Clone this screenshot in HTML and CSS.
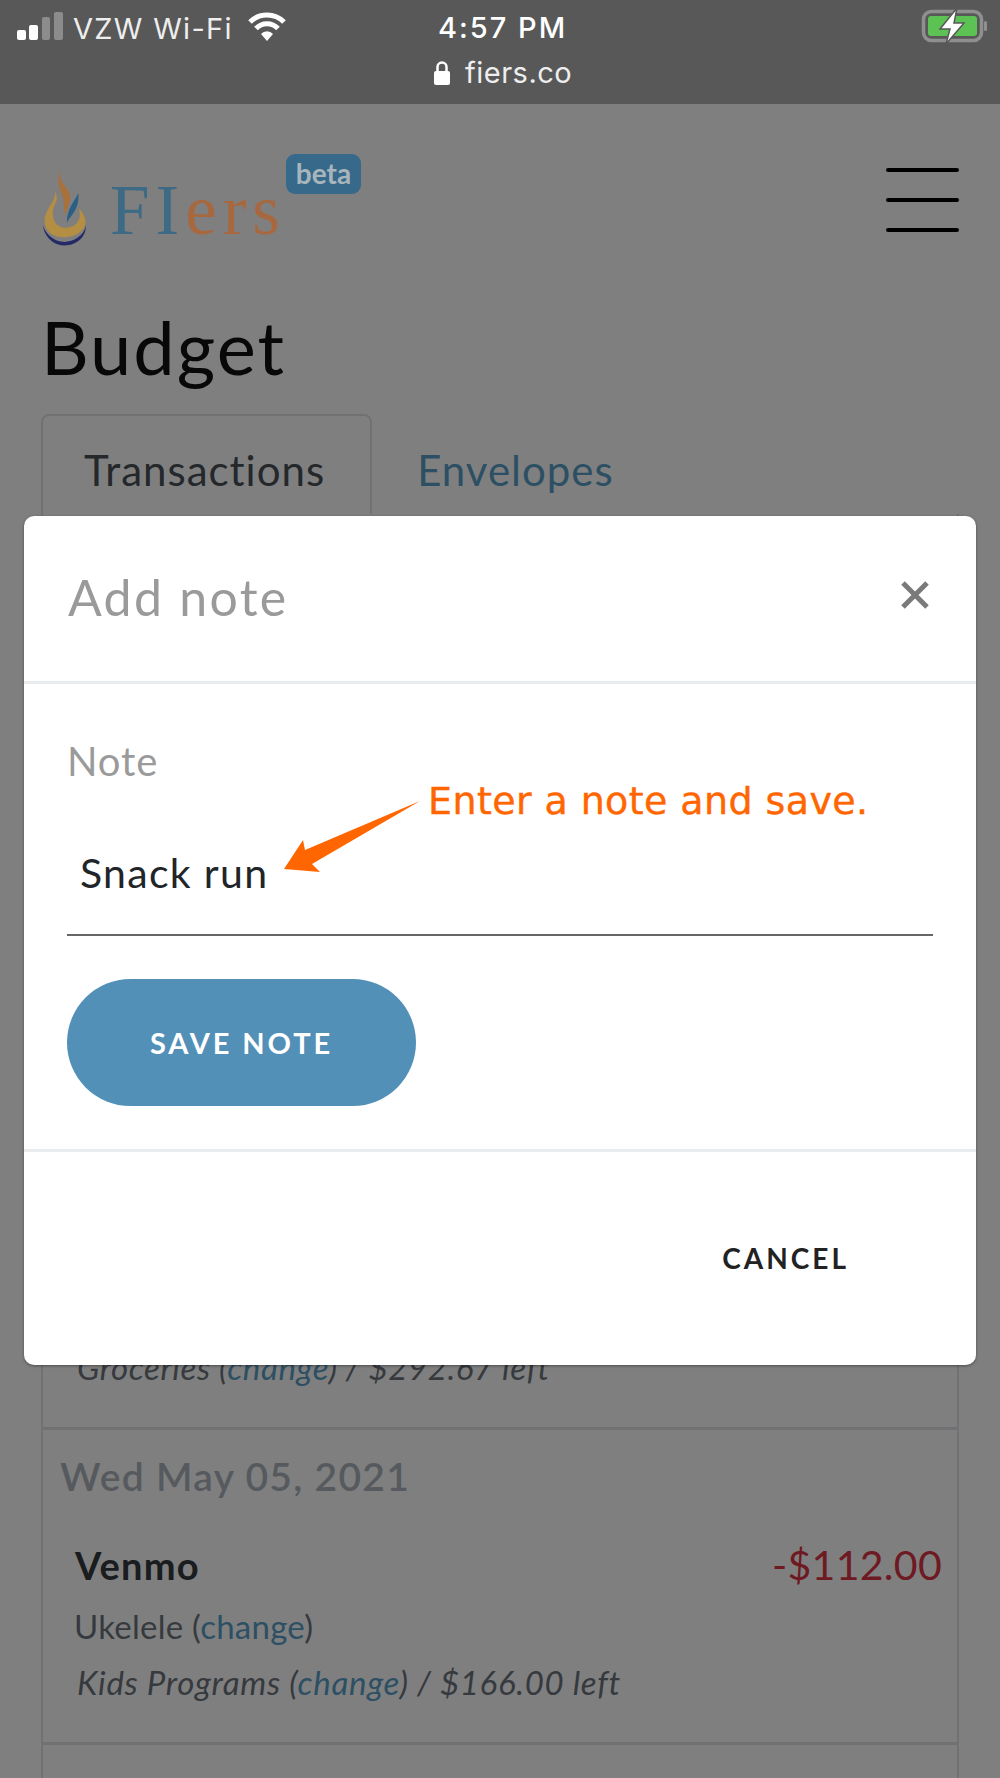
FILE: index.html
```html
<!DOCTYPE html>
<html lang="en">
<head>
    <meta charset="UTF-8">
    <meta name="viewport" content="width=device-width, initial-scale=1.0">
    <title>Budget - FIers</title>
    <link rel="stylesheet" href="styles.css">
</head>
<body>
    <!-- iOS status bar -->
    <div class="statusbar">
        <div class="status-left">
            <svg class="signal" width="46" height="28" viewBox="0 0 46 28">
                <rect x="0" y="18" width="9" height="10" rx="2" fill="#fff"/>
                <rect x="12" y="13" width="9" height="15" rx="2" fill="#fff"/>
                <rect x="25" y="5" width="8" height="23" rx="2" fill="#8c8c8c"/>
                <rect x="37" y="0" width="9" height="28" rx="2" fill="#8c8c8c"/>
            </svg>
            <span class="carrier">VZW Wi-Fi</span>
            <svg class="wifi" width="40" height="30" viewBox="0 0 40 30">
                <path d="M20 30l-6-7a8 8 0 0 1 12 0z" fill="#fff"/>
                <path d="M3 11a24 24 0 0 1 34 0M9 17.500a15 15 0 0 1 22 0" fill="none" stroke="#fff" stroke-width="5"/>
            </svg>
        </div>
        <div class="status-center">
            <div class="clock">4:57 PM</div>
            <div class="address">
                <svg width="18" height="26" viewBox="0 0 18 26">
                    <path d="M4.500 12V7a4.500 4.500 0 0 1 9 0v5" fill="none" stroke="#fff" stroke-width="2.500"/>
                    <rect x="1" y="11" width="16" height="14" rx="2" fill="#fff"/>
                </svg>
                <span>fiers.co</span>
            </div>
        </div>
        <svg class="battery" width="66" height="36" viewBox="0 0 66 36">
            <rect x="2.500" y="3.500" width="58" height="29" rx="8" fill="none" stroke="#8f8f8f" stroke-width="3.500"/>
            <rect x="7" y="8" width="49" height="20" rx="3" fill="#5cc254"/>
            <rect x="63" y="13" width="3" height="10" rx="1.500" fill="#8f8f8f"/>
            <path d="M36 0L19 21h10l-4 15 18-21H33z" fill="#fff" stroke="#585858" stroke-width="1.500"/>
        </svg>
    </div>

    <header class="navbar">
        <div class="logo">
            <svg class="flame" width="43" height="78" viewBox="0 0 130 233">
                <path d="M-1 170C5 215 40 233 65 233c35 0 65-23 65-61-5 33-40 50-65 50-30 0-57-22-66-52z" fill="#232a66"/>
                <path d="M37 70C38 95 20 110 10 135c-12 30-2 60 30 70 35 10 85-5 88-40 2-20-10-35-20-45 7 20 4 40-13 52-20 13-50 8-60-12-10-20-5-40 3-55 6-13 4-25-1-35z" fill="#b48e42"/>
                <path d="M54 3C46 30 60 45 75 65c15 20 3 45-7 75-8-25-2-45-12-65C46 55 42 25 54 3z" fill="#a8703a"/>
                <path d="M107 75C95 100 72 120 72 165c13-25 38-40 35-90z" fill="#2c5f85"/>
            </svg>
            <div class="wordmark"><span class="word-blue">FI</span><span class="word-orange">ers</span></div>
            <span class="beta">beta</span>
        </div>
        <div class="burger">
            <div></div>
            <div></div>
            <div></div>
        </div>
    </header>

    <main class="container">
        <h1>Budget</h1>

        <ul class="tabs">
            <li class="tab active">Transactions</li>
            <li class="tab">Envelopes</li>
        </ul>

        <section class="tx-list">
            <div class="tx-row tx-first">
                <p class="tx-line tx-italic">Groceries (<a href="#">change</a>) / $292.67 left</p>
            </div>
            <div class="tx-row">
                <h3 class="tx-date">Wed May 05, 2021</h3>
                <div class="tx-head">
                    <span class="tx-name">Venmo</span>
                    <span class="tx-amount">-$112.00</span>
                </div>
                <p class="tx-line">Ukelele (<a href="#">change</a>)</p>
                <p class="tx-line tx-italic">Kids Programs (<a href="#">change</a>) / $166.00 left</p>
            </div>
            <div class="tx-row">
                <h3 class="tx-date">Tue May 04, 2021</h3>
            </div>
        </section>
    </main>

    <!-- Add note dialog -->
    <div class="backdrop">
        <div class="modal">
            <div class="modal-header">
                <h2>Add note</h2>
                <svg class="close" width="30" height="30" viewBox="0 0 30 30">
                    <path d="M3 3l24 24M27 3L3 27" stroke="#7a7a7a" stroke-width="5"/>
                </svg>
            </div>
            <div class="modal-body">
                <label class="field-label">Note</label>
                <div class="field-input">Snack run</div>
                <button class="btn-save">SAVE NOTE</button>
                <!-- annotation over the form -->
                <div class="callout">Enter a note and save.</div>
                <svg class="callout-arrow" width="140" height="76" viewBox="0 0 140 76">
                    <path d="M137 4L22 53l-2-10L1 72l36 3-8-8z" fill="#ff6600"/>
                </svg>
            </div>
            <div class="modal-footer">
                <button class="btn-cancel">CANCEL</button>
            </div>
        </div>
    </div>
</body>
</html>
```

FILE: styles.css
```css
* {
    margin: 0;
    padding: 0;
    box-sizing: border-box;
}

body {
    position: relative;
    width: 1000px;
    height: 1778px;
    overflow: hidden;
    font-family: "Lato", "Noto Sans", sans-serif;
    background: #fff;
    color: #212529;
}

/* Status bar */
.statusbar {
    position: relative;
    z-index: 2;
    height: 104px;
    background: #585858;
    color: #fff;
    display: flex;
    justify-content: space-between;
    padding: 8px 13px 0 17px;
    font-family: "Inter", "Liberation Sans", sans-serif;
    font-size: 29px;
}

.status-left {
    display: flex;
    align-items: center;
    gap: 10px;
    height: 36px;
    color: #eee;
    letter-spacing: 1.300px;
}

.carrier {
    padding-top: 4px;
}

.status-left .wifi {
    margin-left: 4px;
}

.status-center {
    position: absolute;
    left: 433px;
    top: 10px;
    text-align: center;
}

.clock {
    font-weight: 500;
    line-height: 36px;
    letter-spacing: 2px;
}

.address {
    display: flex;
    align-items: center;
    gap: 14px;
    line-height: 36px;
    margin-top: 9px;
    letter-spacing: 0.500px;
    color: #eee;
}

/* Navbar */
.navbar {
    display: flex;
    justify-content: space-between;
    align-items: flex-start;
    padding: 64px 41px 0 43px;
    height: 200px;
}

/* logo sits above the backdrop, colours below are already dimmed */
.logo {
    position: relative;
    z-index: 2;
    display: flex;
    align-items: flex-end;
    gap: 24px;
}

.wordmark {
    font-family: "Liberation Serif", serif;
    font-size: 71px;
    letter-spacing: 6px;
    line-height: 71px;
}

.word-blue {
    color: #3d6a84;
}

.word-orange {
    color: #a8683f;
}

.beta {
    position: absolute;
    left: 243px;
    top: -14px;
    width: 75px;
    height: 40px;
    border-radius: 9px;
    background: #36698a;
    color: #a8b5bd;
    font-weight: bold;
    font-size: 28px;
    line-height: 38px;
    text-align: center;
}

.burger {
    width: 73px;
}

.burger div {
    height: 4px;
    border-radius: 2px;
    background: #000;
    margin-bottom: 26px;
}

/* Main */
.container {
    padding: 0 41px;
}

h1 {
    font-size: 74px;
    font-weight: 400;
    letter-spacing: 2px;
    line-height: 86px;
    color: #111;
    margin: 0 0 24px 0;
}

.tabs {
    display: flex;
    list-style: none;
    height: 100px;
}

.tab {
    padding: 31px 43px 0 45px;
    font-size: 42px;
    letter-spacing: 1px;
    color: #5a9fc8;
}

.tab.active {
    padding: 29px 45px 0 41px;
    color: #495057;
    border: 2px solid #dee2e6;
    border-bottom: 0;
    border-radius: 8px 8px 0 0;
}

.tx-list {
    border: 2px solid #dee2e6;
    border-top: 0;
}

.tx-row {
    padding: 0 15px 0 17px;
    border-bottom: 3px solid #dee2e6;
}

.tx-first {
    height: 916px;
    padding-top: 826px;
}

.tx-date {
    font-size: 39px;
    font-weight: 600;
    letter-spacing: 1.300px;
    color: #adb5bd;
    line-height: 52px;
    padding-top: 20px;
}

.tx-head {
    display: flex;
    justify-content: space-between;
    align-items: baseline;
    margin: 38px 0 10px;
    padding-left: 15px;
}

.tx-name {
    font-size: 38px;
    font-weight: bold;
    letter-spacing: 1.200px;
    color: #343a40;
}

.tx-amount {
    font-size: 41px;
    letter-spacing: 0.300px;
    color: #dc3545;
}

.tx-line {
    font-size: 33px;
    letter-spacing: 0.250px;
    line-height: 55px;
    color: #6c757d;
    padding-left: 14px;
}

.tx-italic {
    font-style: italic;
    letter-spacing: 0.700px;
    padding-left: 17px;
    padding-top: 1px;
    padding-bottom: 32px;
}

.tx-first .tx-italic {
    padding-top: 0;
    letter-spacing: 0.600px;
}

.tx-line a {
    color: #5a9fc8;
    text-decoration: none;
}

/* Overlay */
.backdrop {
    position: absolute;
    left: 0;
    top: 104px;
    right: 0;
    bottom: 0;
    z-index: 1;
    background: rgba(0, 0, 0, 0.5);
    padding: 412px 24px 0;
}

.modal {
    background: #fff;
    border-radius: 10px;
    height: 849px;
    box-shadow: 0 1px 3px rgba(0, 0, 0, 0.4);
}

.modal-header {
    display: flex;
    justify-content: space-between;
    align-items: center;
    height: 168px;
    padding: 0 46px 0 44px;
    border-bottom: 3px solid #e9ecef;
}

.modal-header h2 {
    font-size: 50px;
    font-weight: 400;
    letter-spacing: 2.300px;
    color: #9a9a9a;
    margin-bottom: 4px;
}

.close {
    margin-bottom: 8px;
}

.modal-body {
    position: relative;
    height: 468px;
    padding: 53px 43px 0;
    border-bottom: 3px solid #e9ecef;
}

.field-label {
    display: block;
    font-size: 40px;
    letter-spacing: 0.900px;
    line-height: 48px;
    color: #9a9a9a;
}

.field-input {
    height: 139px;
    padding: 51px 13px 0;
    font-size: 41px;
    letter-spacing: 1.300px;
    line-height: 50px;
    color: #212529;
    border-bottom: 2px solid #666;
    margin-top: 12px;
}

.btn-save {
    display: block;
    width: 349px;
    height: 127px;
    margin-top: 43px;
    border: 0;
    border-radius: 64px;
    background: #5290b8;
    color: #fff;
    font-family: inherit;
    font-weight: bold;
    font-size: 29px;
    letter-spacing: 2.900px;
}

.callout {
    position: absolute;
    left: 404px;
    top: 94px;
    font-family: "DejaVu Sans", sans-serif;
    font-size: 38px;
    letter-spacing: 0.400px;
    line-height: 46px;
    color: #ff6600;
    white-space: nowrap;
    -webkit-text-stroke: 0.400px #ff6600;
}

.callout-arrow {
    position: absolute;
    left: 259px;
    top: 113px;
}

.modal-footer {
    display: flex;
    justify-content: flex-end;
    align-items: center;
    height: 212px;
    padding: 0 127px 0 0;
}

.btn-cancel {
    border: 0;
    background: none;
    font-family: inherit;
    font-weight: bold;
    font-size: 28px;
    letter-spacing: 3px;
    color: #222;
}
```
